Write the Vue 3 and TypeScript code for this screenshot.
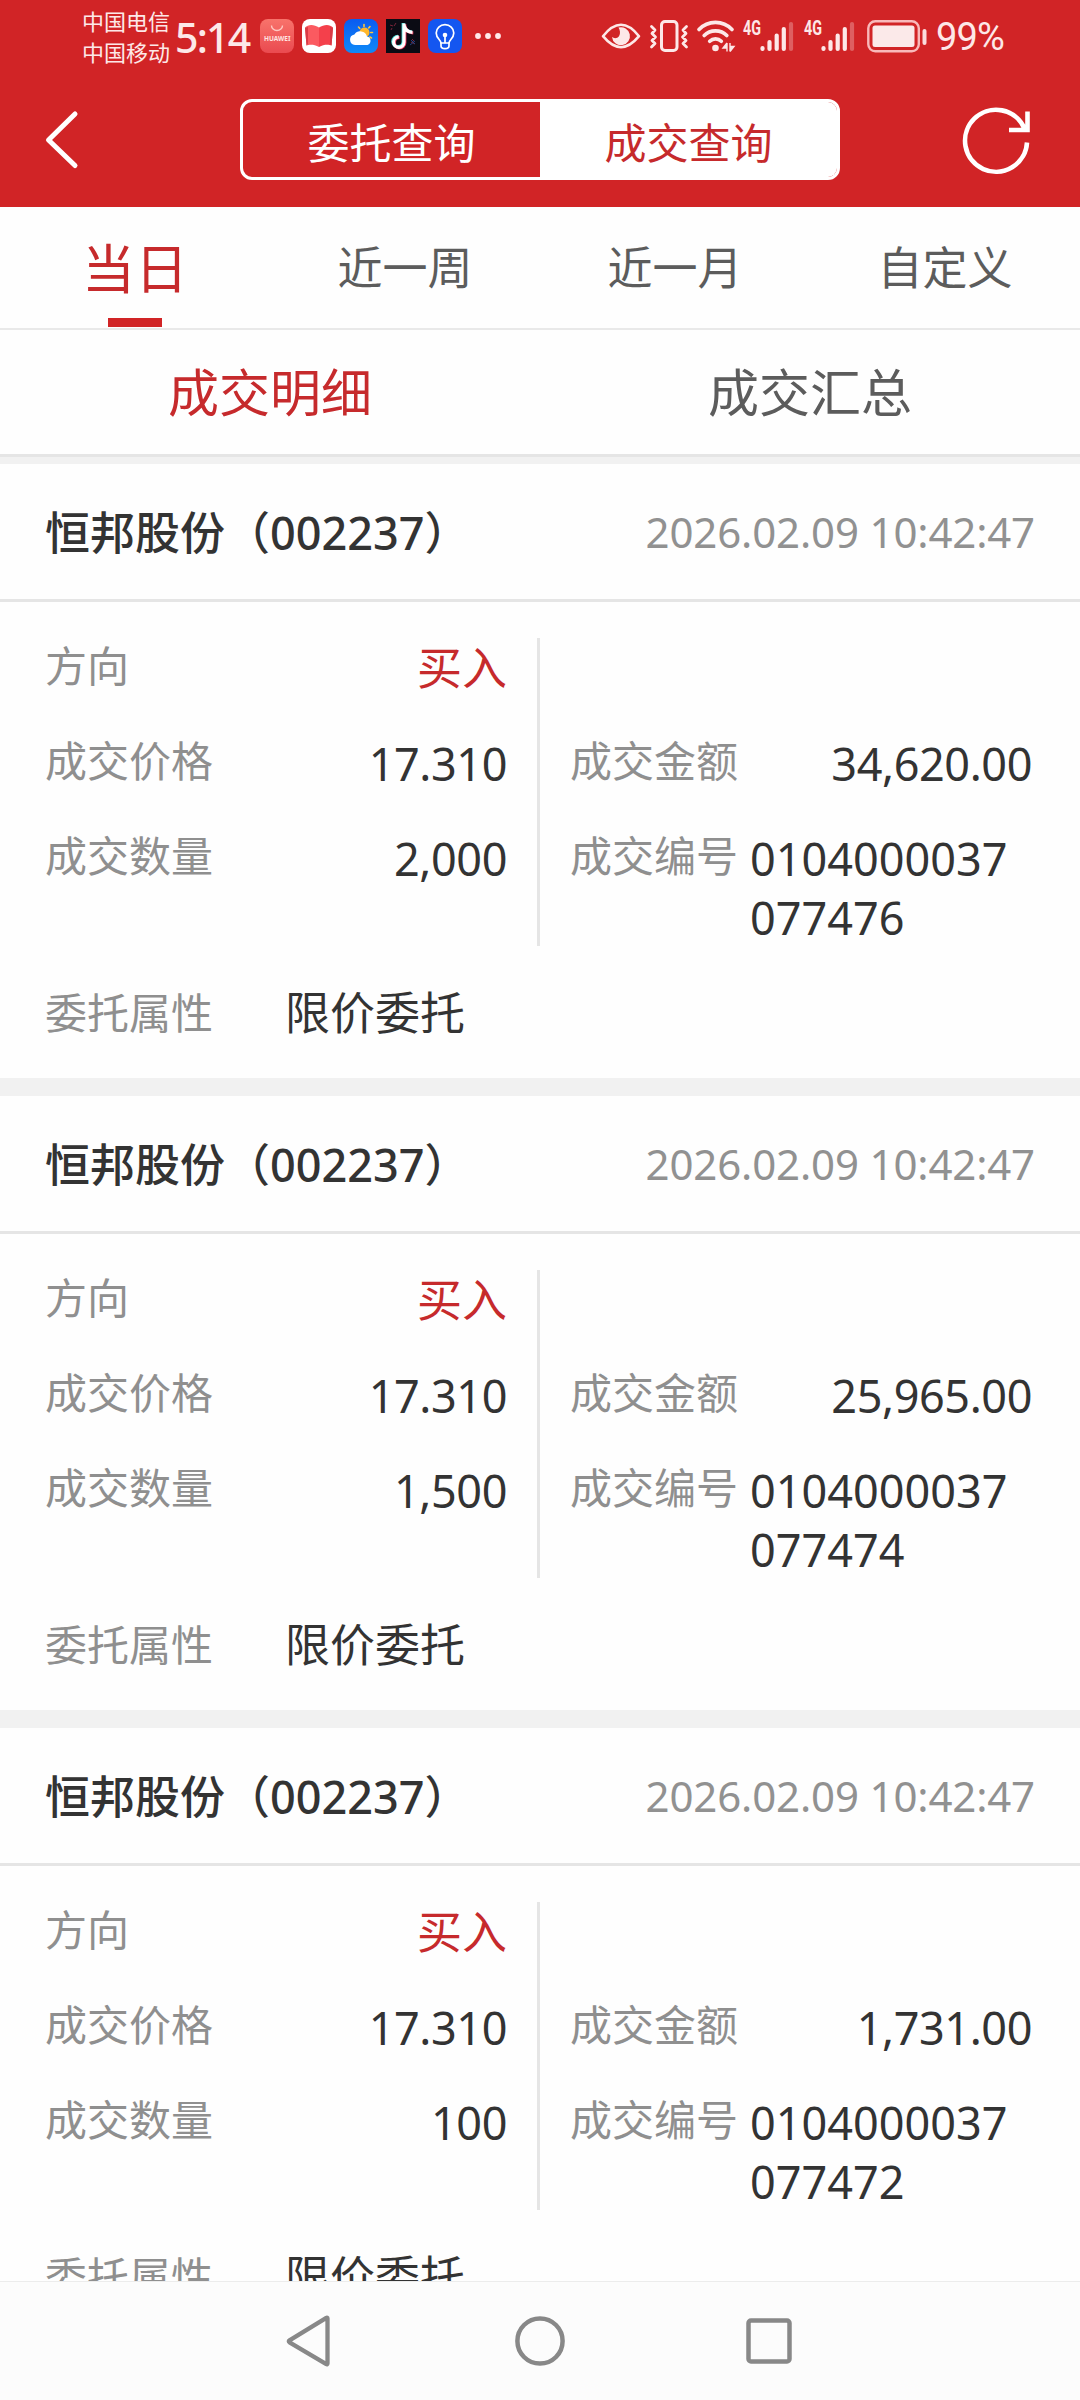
<script setup lang="ts">
interface Deal {
  name: string
  time: string
  side: string
  price: string
  volume: string
  amount: string
  serial: string[]
  kind: string
}

const base = { name: '恒邦股份（002237）', time: '2026.02.09 10:42:47', side: '买入', price: '17.310', kind: '限价委托' }

const deals: Deal[] = [
  { ...base, volume: '2,000', amount: '34,620.00', serial: ['0104000037', '077476'] },
  { ...base, volume: '1,500', amount: '25,965.00', serial: ['0104000037', '077474'] },
  { ...base, volume: '100', amount: '1,731.00', serial: ['0104000037', '077472'] },
]

const periods: string[] = ['当日', '近一周', '近一月', '自定义']
const views: string[] = ['成交明细', '成交汇总']
const sims: number[] = [0, 1]
</script>

<template>
  <div class="screen">
    <header class="top">
      <div class="status">
        <div class="carriers"><span>中国电信</span><span>中国移动</span></div>
        <span class="clock">5:14</span>
        <div class="apps">
          <svg width="34" height="34" viewBox="0 0 34 34">
            <defs><linearGradient id="gh" x1="0" y1="0" x2="0" y2="1"><stop offset="0" stop-color="#f8736b" /><stop offset="1" stop-color="#ea4a50" /></linearGradient></defs>
            <rect width="34" height="34" rx="8" fill="url(#gh)" />
            <path d="M11.5 6.5a5.5 5 0 0 0 11 0" fill="none" stroke="#ffc9c2" stroke-width="1.4" />
            <text x="4" y="22" font-size="6.2" font-weight="700" fill="#ffe4e0" textLength="26.5" lengthAdjust="spacingAndGlyphs">HUAWEI</text>
          </svg>
          <svg width="34" height="34" viewBox="0 0 34 34">
            <rect width="34" height="34" rx="8" fill="#fff" />
            <path d="M3 8.500C6 5 12 5 17 8.500V28C12 25 7 25.500 4.500 26.500Z" fill="#fb5a60" />
            <path d="M31 8.500C28 5 22 5 17 8.500V28C22 25 27 25.500 29.500 26.500Z" fill="#f4404b" />
            <path d="M3 9 6 8v17l-1.500 1.500zM31 9l-3-1v17l1.500 1.500z" fill="#d93a45" />
          </svg>
          <svg width="34" height="34" viewBox="0 0 34 34">
            <defs><linearGradient id="gw" x1="0" y1="0" x2="0" y2="1"><stop offset="0" stop-color="#0a5bf0" /><stop offset="1" stop-color="#0f8af8" /></linearGradient></defs>
            <rect width="34" height="34" rx="8" fill="url(#gw)" />
            <path d="M20 5.500v2M14.500 8l1.300 1.500M26 7.500l-1.300 1.500M28.500 13.500h-1.800M27.500 19l-1.600-1" stroke="#ffc53d" stroke-width="1.600" stroke-linecap="round" />
            <circle cx="20.500" cy="13.500" r="5" fill="#ffb72b" />
            <path d="M11 26a5.300 5.300 0 0 1-.6-10.500 7 7 0 0 1 12.600 2 4.400 4.400 0 0 1 .5 8.500z" fill="#fff" />
          </svg>
          <svg width="34" height="34" viewBox="0 0 34 34">
            <rect width="34" height="34" fill="#0b0b14" />
            <path d="M4 6l3 1M10 4l-2 3M5 11l1-2M29 25l-4-2M26 20l2 2" stroke="#7a2338" stroke-width="1" />
            <path d="M24 26l5-4M25 21l4 4" stroke="#24407e" stroke-width="1" />
            <g fill="none" stroke-width="3.200">
              <path d="M17.200 4v18.500a5.200 5.200 0 1 1-5.200-5.200M17.200 5.500c.9 4.500 4 7 8.500 7.300" stroke="#4fe3df" />
              <path d="M18.800 5.200v18.500a5.200 5.200 0 1 1-5.200-5.200M18.800 6.700c.9 4.500 4 7 8.500 7.300" stroke="#f0365b" />
              <path d="M18 4.600v18.500a5.200 5.200 0 1 1-5.200-5.200M18 6.100c.9 4.500 4 7 8.500 7.300" stroke="#fff" />
            </g>
          </svg>
          <svg width="34" height="34" viewBox="0 0 34 34">
            <rect width="34" height="34" rx="8" fill="#1456f0" />
            <g fill="none" stroke="#fff" stroke-width="1.700" stroke-linecap="round" stroke-linejoin="round">
              <path d="M13 24c0-3-4.800-4.500-4.800-10a8.800 8.300 0 0 1 17.600 0c0 5.500-4.800 7-4.800 10z" />
              <path d="M13 24v3c0 3.500 8 3.500 8 0v-3M17 18v5.500" />
            </g>
            <circle cx="17" cy="16" r="2.300" fill="#fff" />
          </svg>
        </div>
        <svg class="more" width="28" height="8" viewBox="0 0 28 8" fill="#ffe9e9"><circle cx="4" cy="4" r="2.900" /><circle cx="14" cy="4" r="2.900" /><circle cx="24" cy="4" r="2.900" /></svg>

        <div class="system">
          <svg width="40" height="34" viewBox="0 0 40 34">
            <path d="M2 17C9 8 14 5.500 20 5.500S31 8 38 17C31 25.500 26 28 20 28S9 25.500 2 17Z" transform="translate(0 .2)" fill="none" stroke="#fde8e8" stroke-width="2.600" stroke-linejoin="round" />
            <path d="M17.500 8.500a9 9 0 1 1-6.500 9.500c2 1.800 5.500 1.500 7-.8 1.800-2.700 1-6-.5-8.700Z" fill="#fde8e8" />
          </svg>
          <svg class="vibrate" width="38" height="34" viewBox="0 0 38 34" fill="none" stroke="#fde8e8" stroke-linejoin="round" stroke-linecap="round">
            <rect x="11.500" y="2.500" width="15.500" height="29" rx="3.500" stroke-width="3" />
            <path d="M1.500 7.500 5 11 2 14.500 5.500 18 2 21.500 5 24.500 1.500 28M36.500 7.500 33 11l3 3.500-3.500 3.500 3.500 3.500-3 3 3.500 3.500" stroke-width="2.800" />
          </svg>
          <svg class="wifi" width="40" height="34" viewBox="0 0 40 34">
            <g fill="none" stroke="#fde8e8" stroke-width="3.700" stroke-linecap="round">
              <path d="M2 10.500C11 1 26 1 35 10.500M7.200 16.500c6-6.300 16.600-6.300 22.600 0M12.700 22.300c3.300-3.300 8.300-3.300 11.600 0" />
            </g>
            <circle cx="18.500" cy="29" r="3.300" fill="#fde8e8" />
            <path d="M30 24v8.500M30 24l-4 5h4M33 32.500V24M33 32.500l4-5h-4" fill="#fde8e8" stroke="#fde8e8" stroke-width="1.400" />
          </svg>
          <svg v-for="sim in sims" :key="sim" class="signal" width="51" height="34" viewBox="0 0 51 34">
            <text x="0" y="15.800" font-size="19.500" font-weight="700" fill="#fde8e8" textLength="18" lengthAdjust="spacingAndGlyphs">4G</text>
            <g stroke="#fde8e8" stroke-width="4.200" stroke-linecap="round">
              <path d="M19.500 29v1M26.500 23v7M33.700 16.500V30M40.800 10v20" />
              <path d="M48 5v25" opacity=".3" />
            </g>
          </svg>
          <svg class="battery" width="60" height="34" viewBox="0 0 60 34">
            <rect x="1.300" y="2.300" width="50.500" height="30" rx="7" fill="none" stroke="#f9b9ba" stroke-width="2.400" />
            <rect x="5.500" y="6.500" width="42" height="21.500" rx="2.500" fill="#fbe9e9" />
            <rect x="55.500" y="10" width="4" height="16" rx="2" fill="#fbdcdc" />
          </svg>
          <span class="percent">99%</span>
        </div>
      </div>

      <div class="bar">
        <svg width="36" height="60" viewBox="0 0 36 60"><path d="M31 4 4.500 30 31 55.500" fill="none" stroke="#fff" stroke-width="5" stroke-linecap="round" stroke-linejoin="round" /></svg>
        <div class="segment"><span class="seg">委托查询</span><span class="seg on">成交查询</span></div>
        <svg width="70" height="70" viewBox="0 0 70 70"><path d="M66 37.500A31 31 0 1 1 63.500 23.500M66.500 6.500v18.500H48" fill="none" stroke="#fff" stroke-width="4.600" /></svg>
      </div>
    </header>

    <nav class="periods">
      <span v-for="(p, i) in periods" :key="p" class="period" :class="{ on: i === 0 }">{{ p }}</span>
    </nav>
    <nav class="views">
      <span v-for="(v, i) in views" :key="v" class="view" :class="{ on: i === 0 }">{{ v }}</span>
    </nav>

    <main class="list">
      <article v-for="deal in deals" :key="deal.serial[1]" class="deal">
        <div class="head"><span class="name">{{ deal.name }}</span><span class="time">{{ deal.time }}</span></div>
        <div class="body">
          <div class="grid">
            <div class="col left">
              <div class="row"><span class="label">方向</span><span class="value side">{{ deal.side }}</span></div>
              <div class="row"><span class="label">成交价格</span><span class="value num">{{ deal.price }}</span></div>
              <div class="row"><span class="label">成交数量</span><span class="value num">{{ deal.volume }}</span></div>
            </div>
            <div class="col right">
              <div class="row"></div>
              <div class="row"><span class="label">成交金额</span><span class="value num">{{ deal.amount }}</span></div>
              <div class="row"><span class="label">成交编号</span><span class="value serial"><span v-for="s in deal.serial" :key="s">{{ s }}</span></span></div>
            </div>
          </div>
          <div class="kind"><span class="label">委托属性</span><span class="value">{{ deal.kind }}</span></div>
        </div>
      </article>
    </main>

    <footer class="softkeys">
      <svg width="50" height="56" viewBox="0 0 50 56"><path d="M42.500 5.500v45c0 .8-.6 1-1.200.7L4.500 29.300q-1.400-1 0-2L41.300 4.800c.6-.3 1.200-.1 1.200.7Z" fill="none" stroke="#888" stroke-width="4.300" stroke-linejoin="round" /></svg>
      <svg width="56" height="56" viewBox="0 0 56 56"><circle cx="28" cy="28" r="22.600" fill="none" stroke="#888" stroke-width="4.500" /></svg>
      <svg width="56" height="56" viewBox="0 0 56 56"><rect x="7.500" y="7.500" width="41" height="41" rx="2.500" fill="none" stroke="#888" stroke-width="4.500" /></svg>
    </footer>
  </div>
</template>

<style>
body { margin: 0; background: #fefefe; }
</style>

<style scoped>
.screen {
  width: 1080px;
  height: 2400px;
  display: flex;
  flex-direction: column;
  overflow: hidden;
  background: #fefefe;
  color: #333;
  font-family: 'Noto Sans', 'Noto Sans CJK SC', sans-serif;
}
svg { display: block; flex: none; overflow: visible; }
.top { flex: none; height: 207px; background: #d12426; color: #fff; }
.status { height: 72px; display: flex; align-items: center; padding-left: 82px; color: #fde8e8; }
.carriers { width: 88px; display: flex; flex-direction: column; font-size: 22px; line-height: 31px; padding-top: 1px; white-space: nowrap; }
.clock { width: 84px; margin-left: 5px; font-size: 41px; font-weight: 500; line-height: 72px; padding-top: 2px; box-sizing: border-box; letter-spacing: -1.8px; }
.apps { display: flex; gap: 8px; margin-left: 1px; }
.more { margin-left: 12px; }
.system { display: flex; align-items: center; margin-left: 99px; }
.vibrate { margin-left: 9px; }
.wifi { margin-left: 9px; }
.signal { margin-left: 6px; font-family: Roboto, sans-serif; }
.signal + .signal { margin-left: 10px; }
.battery { margin-left: 12px; }
.percent { margin-left: 9px; font-family: Roboto, sans-serif; font-size: 38px; line-height: 72px; padding-top: 2px; letter-spacing: -0.8px; white-space: nowrap; }
.bar { height: 135px; display: flex; align-items: center; padding-left: 44px; }
.segment {
  width: 600px;
  height: 81px;
  box-sizing: border-box;
  display: flex;
  border: 3px solid #fff;
  border-radius: 12px;
  overflow: hidden;
  margin-left: 160px;
}
.seg { flex: 1; text-align: center; font-size: 42px; line-height: 82px; }
.seg.on { background: #fff; color: #c62a2c; }
.bar > svg:last-child { margin-left: 121px; }
.periods { flex: none; height: 123px; display: flex; box-sizing: border-box; border-bottom: 2px solid #e9e9e9; }
.period {
  flex: 1;
  display: flex;
  flex-direction: column;
  align-items: center;
  font-size: 45px;
  line-height: 122px;
  color: #5c5c5c;
}
.period.on { font-size: 53px; line-height: 124px; color: #c62a2c; }
.period.on::after { content: ''; width: 54px; height: 9px; margin-top: -13px; background: #d12426; }
.views { flex: none; height: 134px; box-sizing: border-box; padding-bottom: 7px; display: flex; background: #f1f1f1; }
.view { flex: 1; text-align: center; font-size: 51px; line-height: 124px; color: #5c5c5c; border-bottom: 3px solid #e5e5e5; background: #fefefe; }
.view.on { color: #c62a2c; }
.list { flex: 1; min-height: 0; overflow: hidden; }
.deal { height: 614px; border-bottom: 18px solid #f1f1f1; }
.head { height: 135px; padding: 0 45px; display: flex; justify-content: space-between; border-bottom: 3px solid #e5e5e5; line-height: 136px; }
.name { font-size: 45px; font-weight: 500; line-height: 138px; }
.time { font-size: 42px; letter-spacing: -0.15px; color: #919191; }
.body { padding: 36px 45px 0; }
.grid { display: flex; }
.col { display: flex; flex-direction: column; gap: 36px; }
.left { width: 495px; height: 308px; box-sizing: border-box; padding-right: 30px; border-right: 3px solid #e5e5e5; }
.right { width: 462px; padding-left: 30px; }
.row { display: flex; justify-content: space-between; min-height: 59px; }
.right .row:last-child { height: 118px; }
.label { font-size: 42px; line-height: 56px; color: #8f8f8f; white-space: nowrap; }
.value { font-size: 45px; line-height: 60px; height: 59px; }
.num { line-height: 61px; letter-spacing: -0.4px; }
.side { color: #c62a2c; }
.serial { width: 282px; height: 118px; display: flex; flex-direction: column; line-height: 59px; padding-top: 1px; box-sizing: border-box; }
.kind { display: flex; align-items: center; margin-top: 37px; }
.kind .label { width: 240px; }
.softkeys {
  flex: none;
  height: 119px;
  box-sizing: border-box;
  border-top: 1px solid #ececec;
  background: #fcfcfc;
  display: flex;
  align-items: center;
  padding-left: 285px;
  gap: 173px;
}
.softkeys svg:nth-child(2) { margin-left: 4px; }
</style>
